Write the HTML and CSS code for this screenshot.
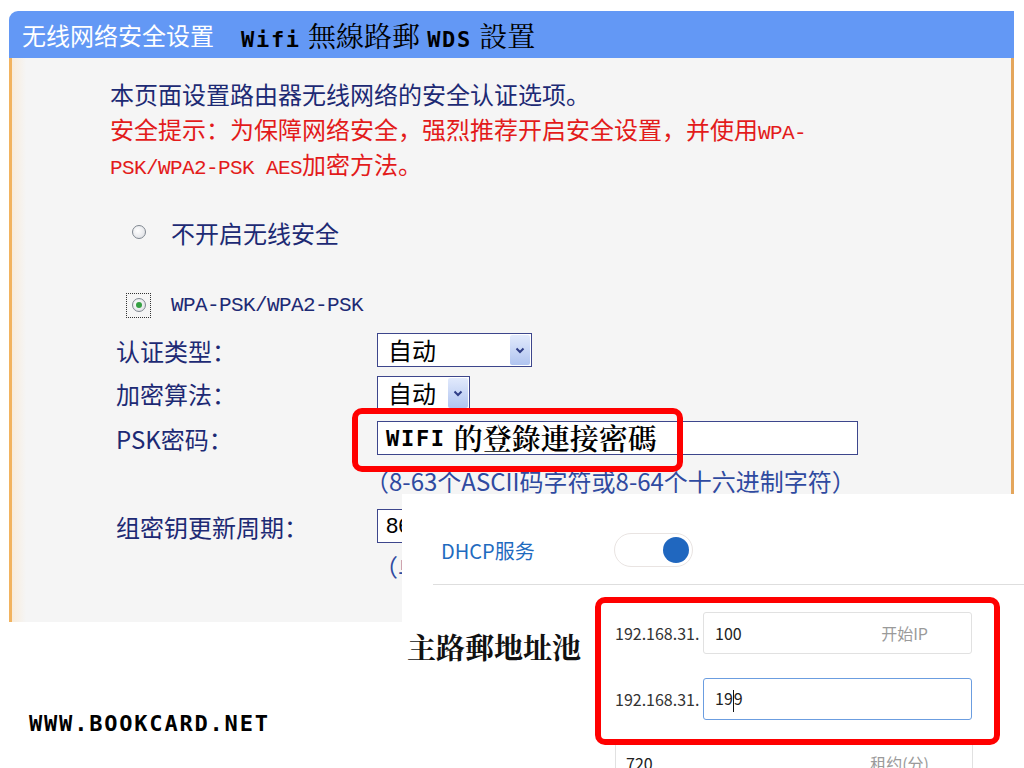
FILE: index.html
```html
<!DOCTYPE html>
<html lang="zh">
  <head>
    <meta charset="UTF-8" />
    <meta name="viewport" content="width=device-width, initial-scale=1.0" />
    <title>无线网络安全设置</title>
    <link rel="stylesheet" href="styles.css">
  </head>
  <body>
    <div class="page">
      <div class="panel">
        <div class="panel-head">
          <span class="head-title">无线网络安全设置</span>
          <span class="head-note"><span class="pixel">Wifi</span> 無線路郵 <span class="pixel">WDS</span> 設置</span>
        </div>
        <div class="panel-body">
          <div class="intro">
            <p>本页面设置路由器无线网络的安全认证选项。</p>
            <p class="warn">安全提示：为保障网络安全，强烈推荐开启安全设置，并使用<span class="mono">WPA-</span><br><span class="mono">PSK/WPA2-PSK AES</span>加密方法。</p>
          </div>

          <div class="option option-off">
            <span class="radio-wrap"><span class="radio"></span></span>
            <span>不开启无线安全</span>
          </div>
          <div class="option option-on">
            <span class="radio-wrap focused"><span class="radio checked"></span></span>
            <span class="mono">WPA-PSK/WPA2-PSK</span>
          </div>

          <div class="field f-auth">
            <span class="label">认证类型：</span>
            <div class="select wide">
              <span class="select-text">自动</span>
              <span class="select-arrow"><svg width="10" height="7" viewBox="0 0 10 7"><path d="M1.5 1.5 L5 5 L8.5 1.5" fill="none" stroke="#2f3d86" stroke-width="2"/></svg></span>
            </div>
          </div>
          <div class="field f-cipher">
            <span class="label">加密算法：</span>
            <div class="select narrow">
              <span class="select-text">自动</span>
              <span class="select-arrow"><svg width="10" height="7" viewBox="0 0 10 7"><path d="M1.5 1.5 L5 5 L8.5 1.5" fill="none" stroke="#2f3d86" stroke-width="2"/></svg></span>
            </div>
          </div>
          <div class="field f-psk">
            <span class="label">PSK密码：</span>
            <div class="text-box psk-box"><span class="pixel">WIFI</span><span class="psk-cjk">的登錄連接密碼</span></div>
          </div>
          <div class="hint hint-psk">（8-63个ASCII码字符或8-64个十六进制字符）</div>
          <div class="field f-group">
            <span class="label">组密钥更新周期：</span>
            <div class="text-box group-box">86400</div>
          </div>
          <div class="hint hint-group">（单位为秒，最小值为30，不更新则为0）</div>
        </div>
      </div>

      <div class="watermark">WWW.BOOKCARD.NET</div>

      <!-- DHCP screenshot pasted over the panel -->
      <div class="dhcp-shot">
        <div class="dhcp-row">
          <span class="dhcp-label">DHCP服务</span>
          <span class="switch"><span class="knob"></span></span>
        </div>
        <div class="divider"></div>
        <div class="pool">
          <div class="pool-label">主路郵地址池</div>
          <div class="pool-fields">
            <div class="ip-row">
              <span class="ip-prefix">192.168.31.</span>
              <div class="box"><span>100</span><span class="box-hint">开始IP</span></div>
            </div>
            <div class="ip-row">
              <span class="ip-prefix">192.168.31.</span>
              <div class="box active"><span>19<span class="caret"></span>9</span></div>
            </div>
            <div class="box lease"><span>720</span><span class="box-hint">租约(分)</span></div>
          </div>
        </div>
      </div>

      <!-- red annotation frames -->
      <div class="mark mark-psk"></div>
      <div class="mark mark-pool"></div>
    </div>
  </body>
</html>
```

FILE: styles.css
```css
body {
  margin: 0;
  background: #fff;
  font-family: "Noto Sans CJK SC", sans-serif;
}
.page {
  position: relative;
  width: 1024px;
  height: 768px;
  overflow: hidden;
}
/* TP-Link panel */
.panel {
  margin: 11px 0 0 9px;
  width: 1005px;
}
.panel-head {
  height: 47px;
  background: #6398f5;
  border-radius: 9px 0 0 0;
  display: flex;
  align-items: center;
  padding-left: 13px;
}
.head-title {
  color: #fff;
  font-size: 24px;
}
.head-note {
  margin-left: 27px;
  font-family: "Noto Serif CJK TC", "Noto Sans CJK TC", sans-serif;
  font-size: 28px;
  color: #000;
}
.pixel {
  font-family: "DejaVu Sans Mono", monospace;
  font-weight: bold;
  font-size: 22px;
  letter-spacing: 1.7px;
  color: #000;
}
.panel-body {
  height: 564px;
  box-sizing: border-box;
  border-left: 3px solid #f2b35f;
  border-right: 3px solid #e4a65c;
  background: linear-gradient(90deg, #f8ecdc, #f5f5f5 14px);
  padding-top: 18px;
  color: #1d2a74;
  font-size: 24px;
}
.intro {
  padding-left: 98px;
}
.intro p {
  margin: 0;
  line-height: 35px;
}
.warn {
  color: #e31b1b;
}
.mono {
  font-family: "Liberation Mono", monospace;
  font-size: 21px;
  letter-spacing: -0.6px;
  line-height: 1;
}
/* radio options */
.option {
  display: flex;
  align-items: center;
  height: 34px;
  padding-left: 114px;
}
.option-off {
  margin-top: 34px;
}
.option-on {
  margin-top: 39px;
}
.radio-wrap {
  width: 25px;
  height: 25px;
  box-sizing: border-box;
  border: 1px dotted transparent;
  display: flex;
  align-items: center;
  justify-content: center;
  margin-right: 20px;
}
.radio-wrap.focused {
  border-color: #333;
}
.radio {
  width: 14px;
  height: 14px;
  box-sizing: border-box;
  border-radius: 50%;
  border: 1px solid #7f8790;
  background: radial-gradient(circle at 40% 40%, #fff, #d9dbe0);
  display: flex;
  align-items: center;
  justify-content: center;
}
.radio.checked::after {
  content: "";
  width: 6px;
  height: 6px;
  border-radius: 50%;
  background: #36a043;
}
/* form rows */
.field {
  display: flex;
  align-items: center;
  height: 34px;
  padding-left: 104px;
}
.label {
  width: 261px;
}
.f-auth {
  margin-top: 11px;
}
.f-cipher {
  margin-top: 9px;
}
.f-psk {
  margin-top: 11px;
}
.f-group {
  margin-top: 15px;
}
.select {
  display: flex;
  height: 34px;
  box-sizing: border-box;
  border: 1px solid #3d468c;
  background: #fff;
}
.select.wide {
  width: 155px;
}
.select.narrow {
  width: 93px;
}
.select-text {
  flex: 1;
  padding-left: 10px;
  color: #000;
  line-height: 32px;
}
.select-arrow {
  width: 20px;
  margin: 1px;
  border-radius: 2px;
  background: linear-gradient(#e2eafc, #b0c4f0);
  display: flex;
  align-items: center;
  justify-content: center;
}
.text-box {
  height: 34px;
  box-sizing: border-box;
  border: 1px solid #3d468c;
  background: #fff;
  display: flex;
  align-items: center;
  padding-left: 8px;
  color: #000;
}
.psk-box {
  width: 481px;
}
.psk-cjk {
  margin-left: 8px;
  font-family: "Noto Serif CJK TC", "Noto Sans CJK TC", sans-serif;
  font-size: 29px;
  font-weight: 600;
  line-height: 32px;
}
.group-box {
  width: 155px;
  font-family: "Liberation Sans", sans-serif;
  font-size: 22px;
}
.hint {
  line-height: 26px;
  padding-left: 353px;
  color: #2f4aa0;
}
.hint-psk {
  margin-top: 13px;
}
.hint-group {
  margin-top: 10px;
  padding-left: 362px;
}
.watermark {
  margin: 91px 0 0 29px;
  font-family: "DejaVu Sans Mono", monospace;
  font-weight: bold;
  font-size: 22px;
  letter-spacing: 1.8px;
  line-height: 22px;
  color: #000;
}
/* DHCP screenshot */
.dhcp-shot {
  position: absolute;
  left: 402px;
  top: 494px;
  width: 622px;
  height: 274px;
  background: #fff;
  overflow: hidden;
}
.dhcp-row {
  display: flex;
  align-items: center;
  height: 34px;
  margin-top: 39px;
  padding-left: 39px;
}
.dhcp-label {
  width: 173px;
  color: #1f6bbf;
  font-size: 20px;
}
.switch {
  width: 79px;
  height: 34px;
  box-sizing: border-box;
  border: 1px solid #e9e4e2;
  border-radius: 17px;
  display: flex;
  align-items: center;
  justify-content: flex-end;
  padding-right: 3px;
}
.knob {
  width: 26px;
  height: 26px;
  border-radius: 50%;
  background: #2067bf;
}
.divider {
  height: 1px;
  background: #dedede;
  margin: 17px 0 0 31px;
}
.pool {
  display: flex;
  margin-top: 27px;
}
.pool-label {
  width: 213px;
  box-sizing: border-box;
  padding: 15px 0 0 5px;
  font-family: "Noto Serif CJK TC", "Noto Sans CJK TC", serif;
  font-size: 29px;
  font-weight: bold;
  line-height: 40px;
  color: #111;
}
.pool-fields {
  display: flex;
  flex-direction: column;
  gap: 24px;
}
.ip-row {
  display: flex;
  align-items: center;
}
.ip-prefix {
  width: 88px;
  font-size: 16px;
  color: #333;
}
.box {
  width: 269px;
  height: 42px;
  box-sizing: border-box;
  border: 1px solid #e1e1e1;
  border-radius: 3px;
  display: flex;
  align-items: center;
  justify-content: space-between;
  padding: 0 43px 0 11px;
  font-size: 16px;
  color: #222;
}
.box.active {
  border-color: #6b9de0;
}
.box-hint {
  color: #9a9a9a;
}
.box.lease {
  width: 358px;
  margin-top: -2px;
  padding-left: 10px;
}
.caret {
  display: inline-block;
  height: 22px;
  border-left: 1px solid #111;
  vertical-align: middle;
}
/* red annotation frames */
.mark {
  position: absolute;
  box-sizing: border-box;
  border: 6px solid #ff0000;
  border-radius: 10px;
}
.mark-psk {
  left: 352px;
  top: 408px;
  width: 331px;
  height: 64px;
}
.mark-pool {
  left: 595px;
  top: 597px;
  width: 405px;
  height: 148px;
}
```
